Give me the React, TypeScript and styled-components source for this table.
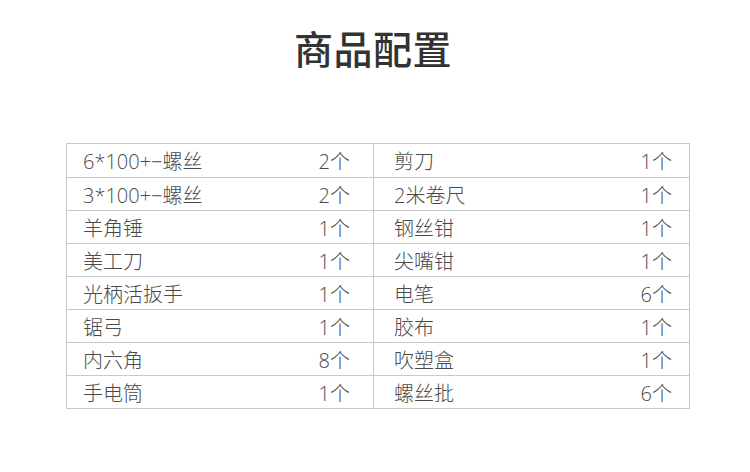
import styled, { createGlobalStyle } from 'styled-components';

const GlobalStyle = createGlobalStyle`
  html, body {
    margin: 0;
    padding: 0;
    background: #ffffff;
  }
  body {
    font-family: 'Noto Sans CJK SC', 'Noto Sans', sans-serif;
  }
`;

const Page = styled.div`
  width: 750px;
  height: 472px;
  background: #ffffff;
  padding-top: 23px;
  box-sizing: border-box;
`;

const Title = styled.h1`
  margin: 0;
  text-align: center;
  font-size: 39px;
  line-height: 48px;
  font-weight: 500;
  color: #333333;
  letter-spacing: 0.5px;
  padding-right: 4px;
`;

const Table = styled.div`
  margin: 72px 0 0 66px;
  width: 624px;
  border: 1px solid #c9c9c9;
  box-sizing: border-box;
`;

const Row = styled.div<{ $first?: boolean }>`
  display: grid;
  grid-template-columns: 306px 316px;
  height: 33px;
  border-top: ${(p) => (p.$first ? 'none' : '1px solid #c9c9c9')};
  box-sizing: border-box;
`;

const Half = styled.div<{ $right?: boolean }>`
  display: flex;
  align-items: center;
  justify-content: space-between;
  padding: ${(p) => (p.$right ? '0 17px 0 20px' : '0 23px 0 16px')};
  border-left: ${(p) => (p.$right ? '1px solid #c9c9c9' : 'none')};
  font-family: 'Open Sans', 'Noto Sans CJK SC', sans-serif;
  font-size: 20px;
  font-weight: 300;
  color: #4a4a4a;
`;

const Name = styled.span``;

const Count = styled.span``;

const items: [string, string, string, string][] = [
  ['6*100+−螺丝', '2个', '剪刀', '1个'],
  ['3*100+−螺丝', '2个', '2米卷尺', '1个'],
  ['羊角锤', '1个', '钢丝钳', '1个'],
  ['美工刀', '1个', '尖嘴钳', '1个'],
  ['光柄活扳手', '1个', '电笔', '6个'],
  ['锯弓', '1个', '胶布', '1个'],
  ['内六角', '8个', '吹塑盒', '1个'],
  ['手电筒', '1个', '螺丝批', '6个'],
];

export default function App() {
  return (
    <Page>
      <GlobalStyle />
      <Title>商品配置</Title>
      <Table>
        {items.map((it, i) => (
          <Row key={i} $first={i === 0}>
            <Half>
              <Name>{it[0]}</Name>
              <Count>{it[1]}</Count>
            </Half>
            <Half $right>
              <Name>{it[2]}</Name>
              <Count>{it[3]}</Count>
            </Half>
          </Row>
        ))}
      </Table>
    </Page>
  );
}
